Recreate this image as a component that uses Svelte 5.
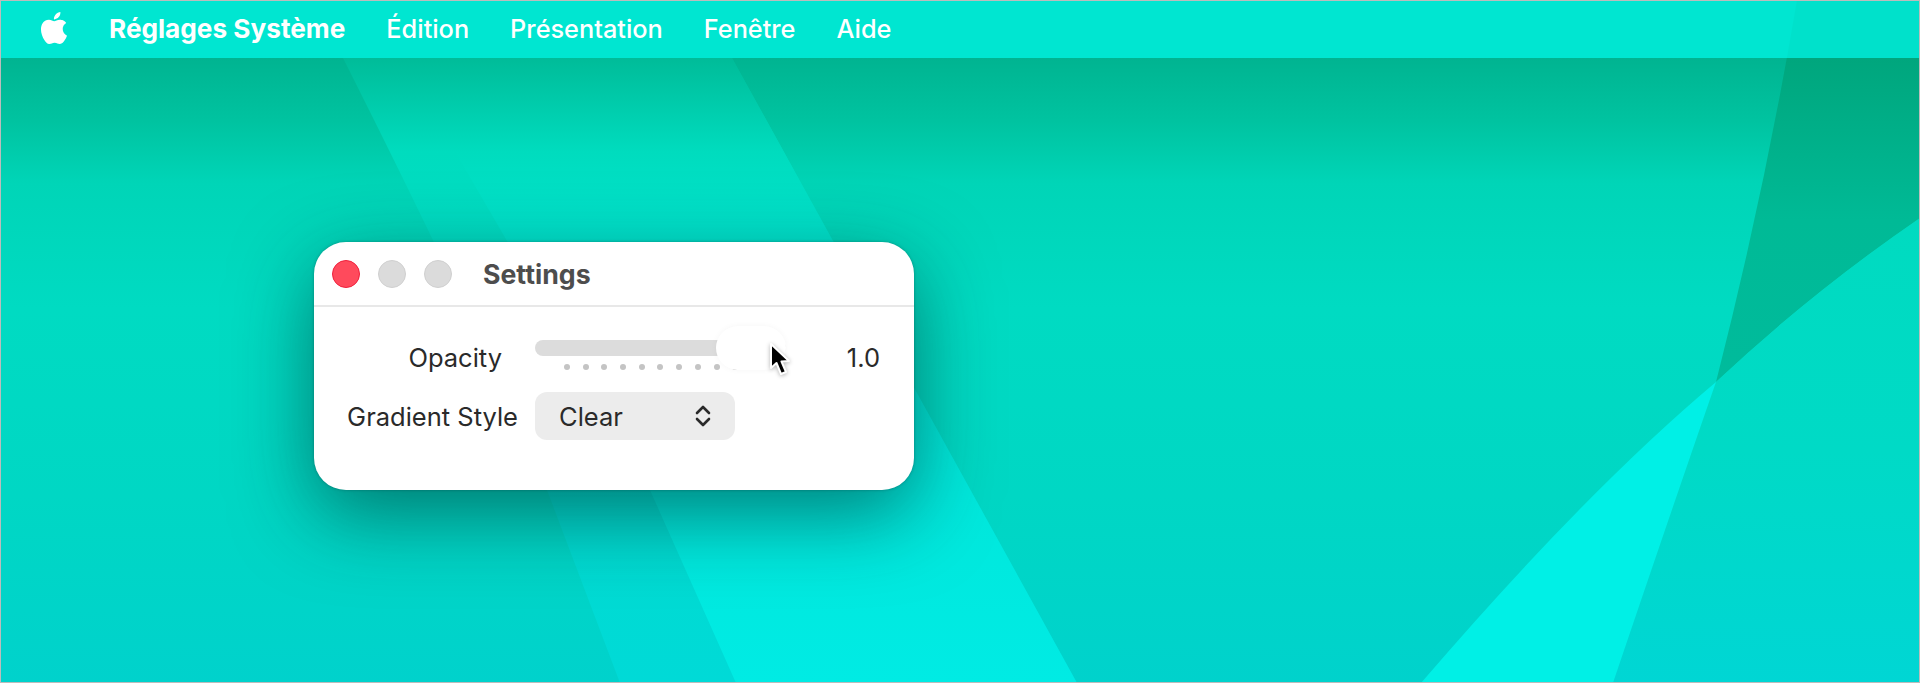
<script lang="ts">
    const menus = ['Édition', 'Présentation', 'Fenêtre', 'Aide'];
    const ticks = Array.from({ length: 11 }, (_, i) => i);
</script>

<div class="desktop">
    <!-- wallpaper -->
    <svg class="wallpaper" viewBox="0 0 1920 683" preserveAspectRatio="none" aria-hidden="true">
        <defs>
            <linearGradient id="base" x1="0" y1="58" x2="0" y2="683" gradientUnits="userSpaceOnUse">
                <stop offset="0" stop-color="#00b491" />
                <stop offset="0.1" stop-color="#00c3a0" />
                <stop offset="0.2" stop-color="#00d5b7" />
                <stop offset="0.4" stop-color="#00dbc2" />
                <stop offset="0.7" stop-color="#00d7c4" />
                <stop offset="1" stop-color="#00d2cc" />
            </linearGradient>
            <linearGradient id="band" x1="0" y1="58" x2="0" y2="683" gradientUnits="userSpaceOnUse">
                <stop offset="0" stop-color="#00bc99" />
                <stop offset="0.15" stop-color="#00dcbe" />
                <stop offset="0.3" stop-color="#00e6d0" />
                <stop offset="0.7" stop-color="#00e8dc" />
                <stop offset="1" stop-color="#00ebe4" />
            </linearGradient>
            <linearGradient id="band2" x1="0" y1="58" x2="0" y2="683" gradientUnits="userSpaceOnUse">
                <stop offset="0" stop-color="#00bc99" />
                <stop offset="0.15" stop-color="#00dcbe" />
                <stop offset="0.3" stop-color="#00dfc6" />
                <stop offset="0.5" stop-color="#00dccb" />
                <stop offset="1" stop-color="#00dad7" />
            </linearGradient>
            <linearGradient id="wedge" x1="0" y1="58" x2="0" y2="382" gradientUnits="userSpaceOnUse">
                <stop offset="0" stop-color="#00a67d" />
                <stop offset="0.5" stop-color="#00ba96" />
                <stop offset="1" stop-color="#00bb9c" />
            </linearGradient>
            <linearGradient id="lower" x1="0" y1="218" x2="0" y2="683" gradientUnits="userSpaceOnUse">
                <stop offset="0" stop-color="#00dbc0" />
                <stop offset="0.5" stop-color="#00dac6" />
                <stop offset="1" stop-color="#00d6d4" />
            </linearGradient>
        </defs>
        <rect width="1920" height="683" fill="url(#base)" />
        <path d="M343 58 Q480 330 547 490 L620 683 L1077 683 L732 58 Z" fill="url(#band2)" />
        <path d="M400 58 Q560 330 650 490 L736 683 L1077 683 L732 58 Z" fill="url(#band)" />
        <path d="M1797 0 Q1765 190 1716 382 Q1812 292 1920 218 L1920 0 Z" fill="url(#wedge)" />
        <path d="M1920 218 Q1812 292 1716 382 Q1675 500 1613 683 L1920 683 Z" fill="url(#lower)" />
        <path d="M1716 382 Q1585 492 1421 683 L1613 683 Q1675 500 1716 382 Z" fill="#00f0e6" />
    </svg>

    <!-- menu bar -->
    <header class="menubar">
        <svg class="apple" viewBox="0 0 24 24" aria-hidden="true">
            <path d="M12.152 6.896c-.948 0-2.415-1.078-3.96-1.04-2.04.027-3.91 1.183-4.961 3.014-2.117 3.675-.546 9.103 1.519 12.09 1.013 1.454 2.208 3.09 3.792 3.039 1.52-.065 2.09-.987 3.935-.987 1.831 0 2.35.987 3.96.948 1.637-.026 2.676-1.48 3.676-2.948 1.156-1.688 1.636-3.325 1.662-3.415-.039-.013-3.182-1.221-3.22-4.857-.026-3.04 2.48-4.494 2.597-4.559-1.429-2.09-3.623-2.324-4.39-2.376-2-.156-3.675 1.09-4.61 1.09zM15.53 3.83c.843-1.012 1.4-2.427 1.245-3.83-1.207.052-2.662.805-3.532 1.818-.78.896-1.454 2.338-1.273 3.714 1.338.104 2.715-.688 3.559-1.701" />
        </svg>
        <span class="app-name">Réglages Système</span>
        {#each menus as item}
            <span class="menu-item">{item}</span>
        {/each}
    </header>

    <!-- settings window -->
    <section class="window">
        <div class="titlebar">
            <span class="light close"></span>
            <span class="light"></span>
            <span class="light"></span>
            <h2>Settings</h2>
        </div>

        <div class="form">
            <span class="label opacity">Opacity</span>
            <div class="slider">
                <div class="track"></div>
                <div class="ticks">
                    {#each ticks as t (t)}
                        <span class="tick"></span>
                    {/each}
                </div>
                <div class="thumb"></div>
            </div>
            <span class="value">1.0</span>

            <span class="label">Gradient Style</span>
            <div class="select">
                <span>Clear</span>
                <svg class="chevrons" viewBox="0 0 16 22" aria-hidden="true">
                    <path d="M2 8 L8 2 L14 8 M2 14 L8 20 L14 14" />
                </svg>
            </div>
        </div>

        <svg class="cursor" viewBox="0 0 24 36" aria-hidden="true">
            <path d="M3 2 L3 26 L8.5 21 L13 32 L18 30 L13.5 19.5 L21 19 Z" />
        </svg>
    </section>
</div>

<style>
    :global(body) {
        margin: 0;
    }

    .desktop {
        position: relative;
        box-sizing: border-box;
        width: 1920px;
        height: 683px;
        overflow: hidden;
        border: 1px solid #bcbcbc;
        font-family: Inter, "Liberation Sans", sans-serif;
    }

    .wallpaper {
        position: absolute;
        left: -1px;
        top: -1px;
        width: 1920px;
        height: 683px;
    }

    .menubar {
        position: relative;
        box-sizing: border-box;
        height: 57px;
        display: flex;
        align-items: center;
        padding: 0 0 3px 37px;
        gap: 41px;
        background: rgba(0, 251, 237, 0.7);
        color: #fff;
        font-size: 25.3px;
    }

    .apple {
        width: 32px;
        height: 32px;
        fill: #fff;
        margin-right: -2px;
    }

    .app-name {
        font-size: 26.2px;
        font-weight: 700;
    }

    .menu-item {
        font-weight: 500;
    }

    .window {
        position: absolute;
        left: 313px;
        top: 241px;
        width: 600px;
        height: 248px;
        background: #fff;
        border-radius: 32px;
        box-shadow: 0 24px 80px rgba(0, 40, 40, 0.55), 0 0 3px rgba(0, 70, 70, 0.4);
        color: #2a2a2a;
    }

    .titlebar {
        display: flex;
        align-items: center;
        gap: 18px;
        height: 63px;
        padding-left: 18px;
        border-bottom: 2px solid #e8e8e8;
    }

    .light {
        box-sizing: border-box;
        width: 28px;
        height: 28px;
        border-radius: 50%;
        background: #dbdbdb;
        border: 1px solid #d0d0d0;
    }

    .close {
        background: #ff4a5c;
        border-color: #f0203c;
    }

    h2 {
        margin: 0 0 0 13px;
        font-size: 26.7px;
        font-weight: 700;
        color: #4d4d4d;
    }

    .form {
        display: grid;
        grid-template-columns: 172px 251px 1fr;
        grid-template-rows: 52px 48px;
        column-gap: 17px;
        row-gap: 8px;
        align-items: center;
        padding: 25px 34px 0 32px;
        font-size: 25.5px;
    }

    .label {
        text-align: right;
    }

    .opacity {
        padding: 0 16px 2px 0;
    }

    .value {
        padding-bottom: 2px;
        text-align: right;
    }

    .slider {
        position: relative;
        align-self: start;
        padding-top: 8px;
    }

    .track {
        height: 16px;
        border-radius: 8px;
        background: #dcdcdc;
    }

    .ticks {
        display: flex;
        justify-content: space-between;
        width: 193px;
        margin: 8px 0 0 29px;
    }

    .tick {
        width: 6px;
        height: 6px;
        border-radius: 50%;
        background: #c4c4c4;
    }

    .thumb {
        position: absolute;
        right: 0;
        top: -6px;
        width: 70px;
        height: 44px;
        border-radius: 22px;
        background: #fff;
        box-shadow: 0 0 6px rgba(0, 0, 0, 0.04);
    }

    .select {
        grid-column: 2;
        display: flex;
        align-items: center;
        justify-content: space-between;
        width: 200px;
        height: 48px;
        box-sizing: border-box;
        padding: 0 24px;
        border-radius: 12px;
        background: #ececec;
    }

    .chevrons {
        width: 16px;
        height: 22px;
        fill: none;
        stroke: #2a2a2a;
        stroke-width: 2.6;
        stroke-linejoin: round;
        stroke-linecap: round;
    }

    .cursor {
        position: absolute;
        left: 454px;
        top: 100px;
        width: 24px;
        height: 36px;
        fill: #000;
        stroke: #fff;
        stroke-width: 2;
        stroke-linejoin: round;
        filter: drop-shadow(0 1px 2px rgba(0, 0, 0, 0.3));
    }
</style>
